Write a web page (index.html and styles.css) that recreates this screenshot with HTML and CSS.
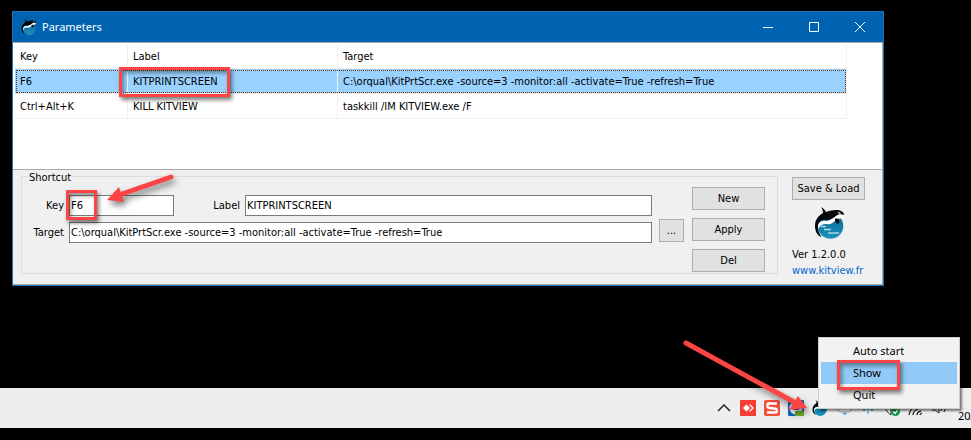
FILE: index.html
```html
<!DOCTYPE html>
<html lang="en">
  <head>
    <meta charset="UTF-8">
    <meta name="viewport" content="width=device-width, initial-scale=1.0">
    <title>Parameters</title>
    <link rel="stylesheet" href="styles.css">
  </head>
  <body>
    <svg class="defs" aria-hidden="true">
      <defs>
        <linearGradient id="sea" x1="0" y1="0" x2="0" y2="1">
          <stop offset="0" stop-color="#0a6690"/>
          <stop offset="1" stop-color="#1a93bd"/>
        </linearGradient>
        <symbol id="orca" viewBox="0 0 30 32">
          <circle cx="15.500" cy="19" r="12.800" fill="url(#sea)"/>
          <path d="M2 22c0-6 4-9 9-8 5 0 7-5 11-6 3-1 5-2 7 1-2 3-5 2-8 4-3 3-6 5-9 4-5 0-7 1-9 6z" fill="#fff"/>
          <path d="M6 0c3 2 4 3 5 5 5-2 12-3 15-1 2 1 3 2 3 4-3-1-6-1-8 1-3 2-5 4-9 4-6-1-9 2-9 7 0 4 1 6 3 9l0 1c-4-2-6-6-6-11 0-6 3-10 8-13 0-3-1-4-2-6z" fill="#06090b"/>
          <path d="M20 12c2-1 4 0 4 1 1 2 0 3-1 4-2-1-3-2-3-5z" fill="#06090b"/>
          <path d="M23 5l3 1-1 1-2-1z" fill="#fff"/>
        </symbol>
      </defs>
    </svg>

    <main class="window">
      <header class="titlebar">
        <svg class="title-icon"><use href="#orca"/></svg>
        <h1>Parameters</h1>
        <button class="caption" aria-label="Minimize"><svg width="10" height="10"><path d="M0 5.500h10"/></svg></button>
        <button class="caption" aria-label="Maximize"><svg width="10" height="10"><path d="M.5.500h9v9h-9z"/></svg></button>
        <button class="caption" aria-label="Close"><svg width="10" height="10"><path d="M0 0l10 10M10 0L0 10"/></svg></button>
      </header>

      <section class="list">
        <table>
          <thead>
            <tr><th class="col-key">Key</th><th class="col-label">Label</th><th>Target</th></tr>
          </thead>
          <tbody>
            <tr class="selected">
              <td>F6</td>
              <td><span class="marked">KITPRINTSCREEN<i class="mark mark-label"></i></span></td>
              <td>C:\orqual\KitPrtScr.exe -source=3 -monitor:all -activate=True -refresh=True</td>
            </tr>
            <tr>
              <td>Ctrl+Alt+K</td>
              <td>KILL KITVIEW</td>
              <td>taskkill /IM KITVIEW.exe /F</td>
            </tr>
          </tbody>
        </table>
      </section>

      <section class="editor">
        <fieldset>
          <legend>Shortcut</legend>
          <div class="fields">
            <div class="row">
              <label class="first" for="key">Key</label>
              <span class="marked"><input class="key" id="key" value="F6"><i class="mark mark-key"></i></span>
              <label class="second" for="label">Label</label>
              <input class="grow" id="label" value="KITPRINTSCREEN">
            </div>
            <div class="row">
              <label class="first" for="target">Target</label>
              <input class="grow" id="target" value="C:\orqual\KitPrtScr.exe -source=3 -monitor:all -activate=True -refresh=True">
            </div>
          </div>
          <button class="btn browse" aria-label="Browse">...</button>
          <div class="actions">
            <button class="btn">New</button>
            <button class="btn">Apply</button>
            <button class="btn">Del</button>
          </div>
        </fieldset>
        <aside class="about">
          <button class="btn">Save &amp; Load</button>
          <div class="logo">
            <svg viewBox="0 0 30 32" width="30" height="32">
              <use href="#orca"/>
              <path d="M6 19.500h5M9 22.500h7M13 26h11" stroke="#a9d8e8" stroke-width="1.500" fill="none"/>
            </svg>
          </div>
          <div>Ver 1.2.0.0</div>
          <a href="#">www.kitview.fr</a>
        </aside>
      </section>
    </main>

    <footer class="taskbar">
      <svg class="tray" width="16" height="16"><path d="M2 11l6-6 6 6" fill="none" stroke="#222" stroke-width="1.500"/></svg>
      <svg class="tray" width="16" height="16">
        <path d="M0 0h16v16H0z" fill="#f73c36"/>
        <path d="M6.500 4.500L10 8l-3.500 3.500L3 8z" fill="#fff"/>
        <path d="M9.500 4.500L13 8l-3.500 3.500" fill="none" stroke="#fff" stroke-width="1.300"/>
      </svg>
      <svg class="tray" width="16" height="16">
        <rect width="16" height="16" rx="2" fill="#f2503b"/>
        <path d="M13 3.500H4.500Q3.500 3.500 3.500 5v1.500q0 1 1 1.200l7 1q1.200.2 1.200 1.300v1q0 1.500-1.200 1.500H3" fill="none" stroke="#fff" stroke-width="2.400"/>
      </svg>
      <svg class="tray" width="16" height="16">
        <rect width="16" height="16" rx="1" fill="#1268c4"/>
        <circle cx="8" cy="8" r="6.500" fill="#fff"/>
        <path d="M3 8l3-2v1h4V6l3 2-3 2H6z" fill="#1559a5"/>
        <path d="M7 11h9v5H7z" fill="#76b82a"/>
      </svg>
      <svg class="tray" width="16" height="16"><use href="#orca"/></svg>
      <svg class="tray" width="16" height="16"><path d="M3 8c-2 3 1 4 3 4h6c2 0 4-2 2-4z" fill="#fff" stroke="#888"/><path d="M6 13h5l-2 2z" fill="#22a5d4"/></svg>
      <svg class="tray" width="16" height="16"><path d="M3 9h2v2H3zM11 9h2v2h-2zM7 7h2v3H7zM7 12l1-1 1 1-1 3z" fill="#31b6e8"/></svg>
      <svg class="tray" width="16" height="16"><path d="M1 7q1 5 6 8V7z" fill="#fff" stroke="#222"/><circle cx="11.500" cy="11.500" r="4.500" fill="#15964b"/><path d="M9 11.500l2 2 3-4" fill="none" stroke="#fff" stroke-width="1.300"/></svg>
      <svg class="tray" width="16" height="16"><path d="M1 15q1-6 6-8M5 15q0-4 5-6M9 15q0-3 4-4M12 15q0-1 2-2" fill="none" stroke="#222" stroke-width="1.300"/></svg>
      <svg class="tray" width="16" height="16"><path d="M0 7h3l4-4v10L3 10H0" fill="none" stroke="#222"/><path d="M9 5q2 3 0 6M12 4q3 4 0 8" fill="none" stroke="#222"/></svg>
      <time>20/</time>
    </footer>

    <nav class="menu">
      <button>Auto start</button>
      <button class="active"><span class="marked">Show<i class="mark mark-show"></i></span></button>
      <button>Quit</button>
    </nav>

    <svg class="arrow arrow-key" width="80" height="50">
      <path d="M69 7L20 24" stroke="#fb4444" stroke-width="5" stroke-linecap="round"/>
      <path d="M5 30l12-13 5 15z" fill="#fb4444"/>
    </svg>
    <svg class="arrow arrow-tray" width="136" height="84">
      <path d="M6 6l108 59" stroke="#fb4444" stroke-width="5" stroke-linecap="round"/>
      <path d="M127 71l-9-12-9 14z" fill="#fb4444"/>
    </svg>
  </body>
</html>
```

FILE: styles.css
```css
* {
  box-sizing: border-box;
}
body {
  position: relative;
  display: flex;
  flex-direction: column;
  min-height: 100vh;
  margin: 0;
  padding: 11px 0 12px;
  overflow: hidden;
  background: #000;
  color: #000;
  font: 11px/16px "DejaVu Sans Condensed", Tahoma, sans-serif;
}
.defs {
  position: absolute;
  width: 0;
  height: 0;
}
button,
input {
  font: inherit;
  color: inherit;
}

/* window */
.window {
  margin: 0 87px 0 12px;
  border: 1px solid #1a72b8;
}
.titlebar {
  display: flex;
  align-items: center;
  height: 30px;
  padding-left: 8px;
  background: #0063b1;
  color: #fff;
}
.title-icon {
  width: 16px;
  height: 16px;
}
h1 {
  flex: 1;
  margin: 0 0 0 5px;
  font: 11px/16px "Noto Sans", "Segoe UI", sans-serif;
}
.caption {
  display: flex;
  align-items: center;
  justify-content: center;
  width: 46px;
  height: 30px;
  padding: 0;
  border: 0;
  background: none;
}
.caption path {
  fill: none;
  stroke: #fff;
}

/* shortcut list */
.list {
  height: 128px;
  padding: 1px 35px 0 2px;
  border: solid #aaa;
  border-width: 1px 1px 1px 0;
  background: #fff;
}
table {
  width: 100%;
  table-layout: fixed;
  border-collapse: separate;
  border-spacing: 0;
}
.col-key {
  width: 113px;
}
.col-label {
  width: 210px;
}
th,
td {
  height: 25px;
  padding: 2px 5px 0;
  border: solid #f0f0f0;
  border-width: 0 1px 1px 0;
  font-weight: normal;
  text-align: left;
  white-space: nowrap;
}
.selected {
  background: #99d1ff;
  outline: 1px dotted #662e00;
  outline-offset: -2px;
}

/* editor */
.editor {
  display: flex;
  height: 115px;
  border: solid #aaa;
  border-width: 0 1px 1px 0;
  background: #f0f0f0;
}
fieldset {
  display: flex;
  flex: 1;
  min-width: 0;
  height: 104px;
  margin: 0 0 0 8px;
  padding: 12px 12px 0 7px;
  border: 1px solid #dcdcdc;
}
legend {
  height: 12px;
  padding: 0;
  line-height: 15px;
}
.fields {
  flex: 1;
  padding-top: 1px;
}
.row {
  display: flex;
  align-items: center;
  margin-bottom: 6px;
}
.first {
  width: 35px;
  margin-right: 5px;
  text-align: right;
}
.second {
  width: 66px;
  margin-right: 5px;
  text-align: right;
}
input {
  height: 21px;
  padding: 0 1px;
  border: 1px solid #7a7a7a;
  background: #fff;
}
.key {
  display: block;
  width: 105px;
}
.grow {
  flex: 1;
  min-width: 0;
}
.btn {
  width: 73px;
  height: 23px;
  padding: 0;
  border: 1px solid #adadad;
  background: #e1e1e1;
}
.browse {
  width: 25px;
  margin: 25px 8px 0 7px;
}
.actions {
  display: flex;
  flex-direction: column;
  gap: 8px;
  margin-top: -7px;
}
.about {
  display: flex;
  flex-direction: column;
  align-items: flex-start;
  width: 104px;
  padding: 7px 0 0 14px;
}
.logo {
  height: 32px;
  margin: 7px 0 8px 23px;
}
a {
  color: #0066cc;
  text-decoration: none;
}

/* taskbar */
.taskbar {
  display: flex;
  align-items: center;
  gap: 8px;
  height: 40px;
  margin-top: auto;
  padding-left: 716px;
  overflow: hidden;
  background: #eee;
}
.tray {
  flex: none;
}
time {
  margin: 16px 0 0 2px;
  font: 11px/16px "Noto Sans", "Segoe UI", sans-serif;
}

/* tray menu */
.menu {
  position: absolute;
  right: 11px;
  bottom: 31px;
  width: 142px;
  padding: 2px;
  border: 1px solid #ccc;
  background: #f2f2f2;
  box-shadow: 2px 2px 2px rgba(0, 0, 0, 0.5);
}
.menu button {
  display: block;
  width: 100%;
  height: 22px;
  padding: 0 32px;
  border: 0;
  background: none;
  font: 11px/20px "Noto Sans", "Segoe UI", sans-serif;
  text-align: left;
}
.menu .active {
  background: #91c9f7;
}

/* red call-outs */
.marked {
  position: relative;
}
.mark {
  position: absolute;
  border: 3px solid #fb4444;
  box-shadow: 2px 3px 4px rgba(0, 0, 0, 0.5), inset 2px 3px 4px rgba(0, 0, 0, 0.4);
  pointer-events: none;
}
.mark-label {
  top: -8px;
  left: -14px;
  width: 111px;
  height: 30px;
}
.mark-key {
  top: -5px;
  left: -3px;
  width: 31px;
  height: 30px;
}
.mark-show {
  top: -5px;
  left: -16px;
  width: 63px;
  height: 30px;
}
.arrow {
  position: absolute;
  filter: drop-shadow(2px 4px 3px rgba(0, 0, 0, 0.5));
  pointer-events: none;
}
.arrow-key {
  top: 170px;
  left: 102px;
}
.arrow-tray {
  right: 155px;
  bottom: 19px;
}
```
